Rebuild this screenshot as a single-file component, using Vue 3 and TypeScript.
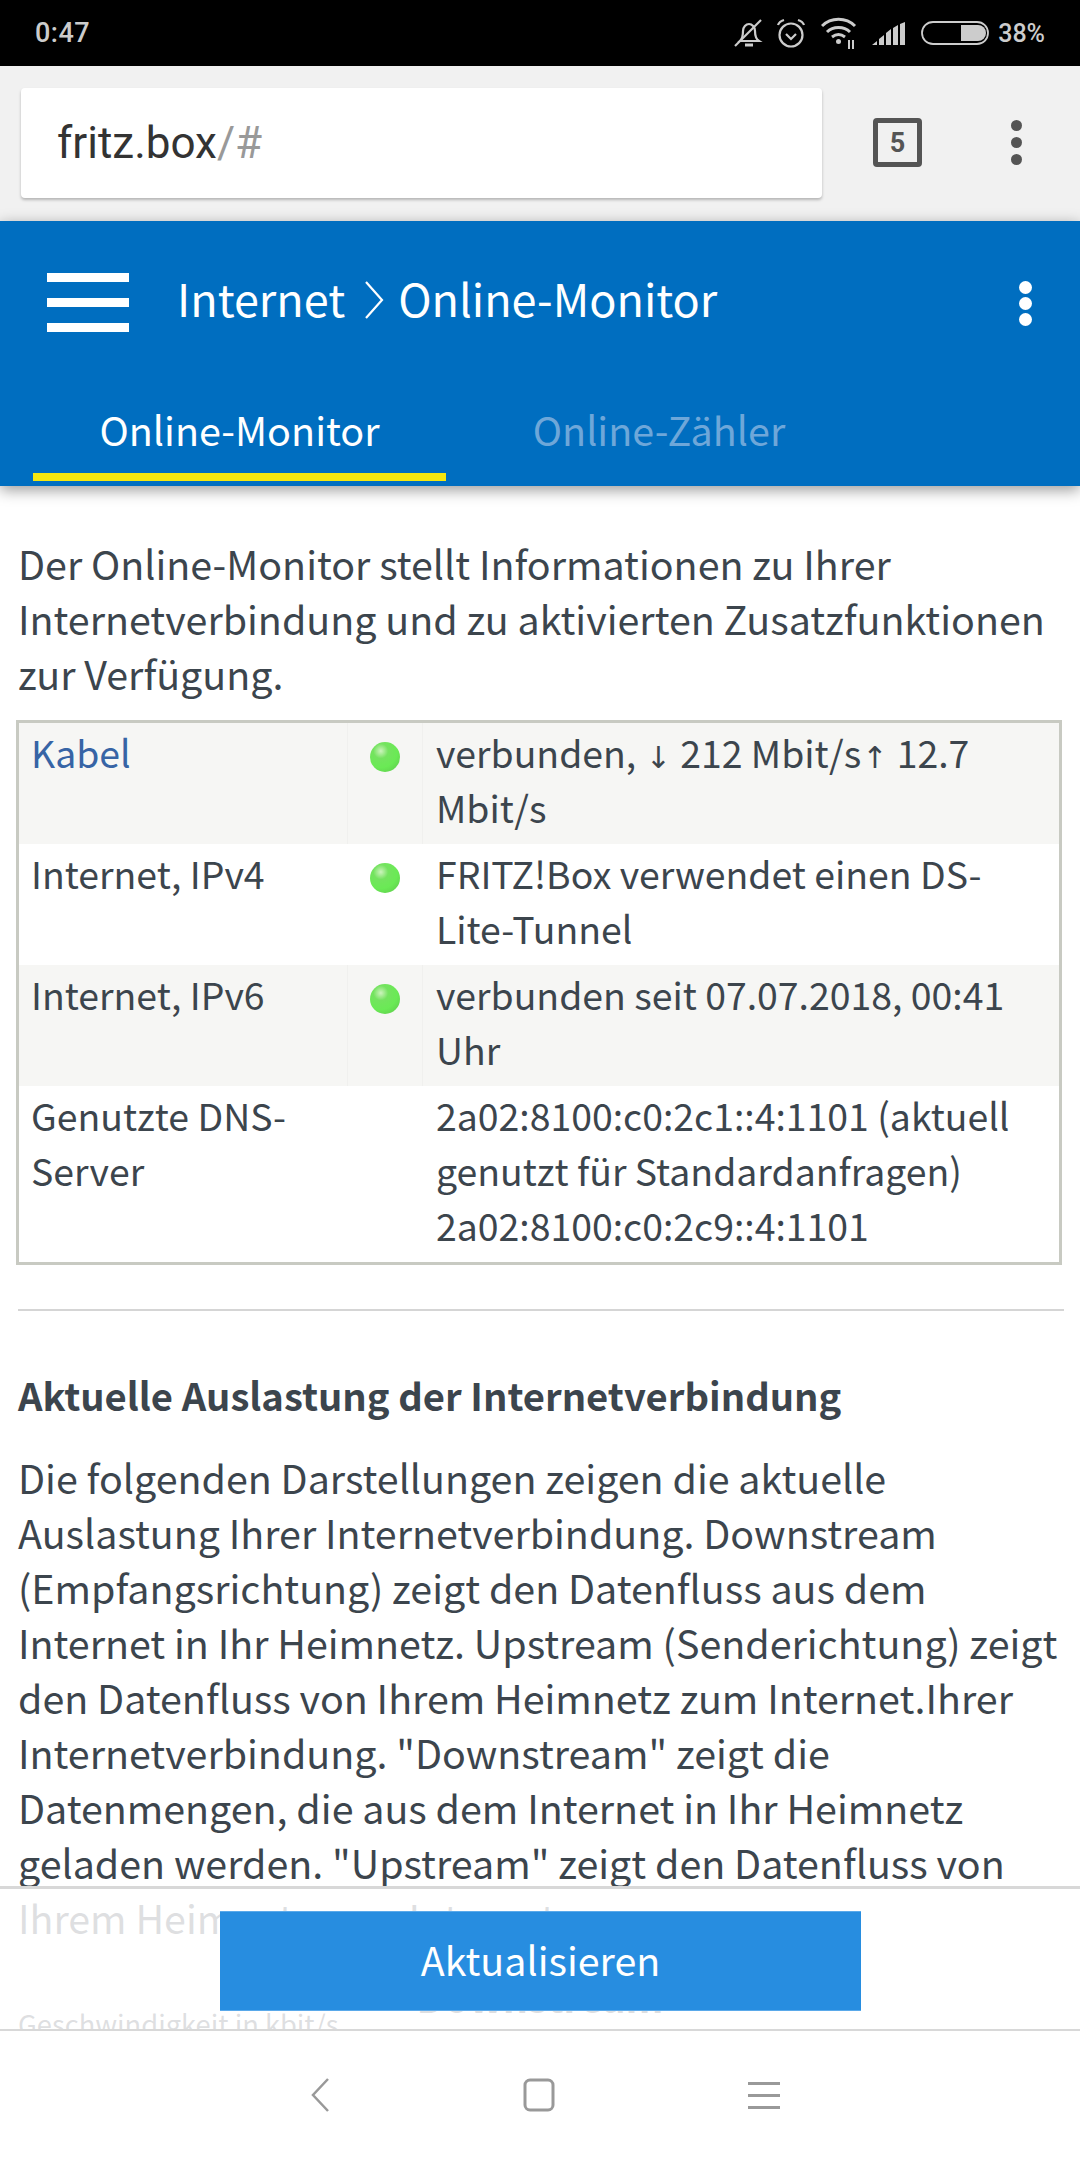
<script setup lang="ts">
interface StatusRow {
  label: string
  link?: boolean
  led: boolean
  lines: string[]
}

const rows: StatusRow[] = [
  { label: 'Kabel', link: true, led: true, lines: ['verbunden, ↓ 212 Mbit/s↑ 12.7', 'Mbit/s'] },
  { label: 'Internet, IPv4', led: true, lines: ['FRITZ!Box verwendet einen DS-', 'Lite-Tunnel'] },
  { label: 'Internet, IPv6', led: true, lines: ['verbunden seit 07.07.2018, 00:41', 'Uhr'] },
  {
    label: 'Genutzte DNS-Server',
    led: false,
    lines: ['2a02:8100:c0:2c1::4:1101 (aktuell', 'genutzt für Standardanfragen)', '2a02:8100:c0:2c9::4:1101'],
  },
]

const paragraph = [
  'Die folgenden Darstellungen zeigen die aktuelle',
  'Auslastung Ihrer Internetverbindung. Downstream',
  '(Empfangsrichtung) zeigt den Datenfluss aus dem',
  'Internet in Ihr Heimnetz. Upstream (Senderichtung) zeigt',
  'den Datenfluss von Ihrem Heimnetz zum Internet.Ihrer',
  'Internetverbindung. "Downstream" zeigt die',
  'Datenmengen, die aus dem Internet in Ihr Heimnetz',
  'geladen werden. "Upstream" zeigt den Datenfluss von',
  'Ihrem Heimnetz zum Internet.',
]

// die Pfeile sind in der Vorlage deutlich kleiner als der Text
function parts(line: string): string[] {
  return line.split(/([↓↑])/).filter(Boolean)
}
</script>

<template>
  <div class="screen">
    <div class="statusbar">
      <span class="time">0:47</span>
      <div class="status-icons">
        <svg class="bell" width="30" height="30" viewBox="0 0 30 30" fill="none" stroke="#ccc" stroke-width="2.2">
          <path d="M6 23c2-2 3-5 3-10 0-4 3-7 6-7s6 3 6 7c0 5 1 8 4 10z" />
          <path d="M11 27h8" stroke-width="3" />
          <path d="M1 28L27 2" />
        </svg>
        <svg width="30" height="31" viewBox="0 0 30 31" fill="none" stroke="#ccc" stroke-width="2.2">
          <circle cx="15" cy="17" r="11.5" />
          <path d="M10 16l5 5 5-5" />
          <path d="M2 7c1-3 3-4 6-5M28 7c-1-3-3-4-6-5" />
        </svg>
        <svg width="36" height="33" viewBox="0 0 36 33" fill="none" stroke="#ccc" stroke-width="3">
          <path d="M1 9c9-9 24-9 33 0" />
          <path d="M6 15c6-6 17-6 23 0" />
          <path d="M11 20c4-3 9-3 13 0" />
          <circle cx="17.500" cy="24.500" r="2.500" fill="#ccc" stroke="none" />
          <path d="M28 23v9M32 23v9" stroke-width="2" />
        </svg>
        <svg width="34" height="23" viewBox="0 0 34 23" fill="#ccc">
          <path d="M0 23l5-4v4zM7 17l5-4v10H7zM14 11l5-4v16h-5zM21 6l5-3v20h-5zM28 2l5-2v23h-5z" />
        </svg>
        <svg width="68" height="24" viewBox="0 0 68 24">
          <rect x="1" y="1" width="66" height="22" rx="11" fill="none" stroke="#ccc" stroke-width="1.800" />
          <path d="M40 4h17a8 8 0 0 1 0 16H40z" fill="#ccc" />
        </svg>
        <span class="battery">38%</span>
      </div>
    </div>

    <div class="browserbar">
      <div class="urlbox"><span class="host">fritz.box</span><span class="path">/#</span></div>
      <div class="tabcount">5</div>
      <div class="dots dots-grey"><i></i><i></i><i></i></div>
    </div>

    <header class="appbar">
      <div class="titlerow">
        <div class="burger"><i></i><i></i><i></i></div>
        <div class="title">
          <span>Internet</span>
          <svg class="crumb" width="20" height="38" viewBox="0 0 20 38" fill="none" stroke="#fff" stroke-width="2.200">
            <path d="M2 1l16 18L2 37" />
          </svg>
          <span>Online-Monitor</span>
        </div>
        <div class="dots dots-white"><i></i><i></i><i></i></div>
      </div>
      <nav class="tabs">
        <div class="tab active">Online-Monitor</div>
        <div class="tab second">Online-Zähler</div>
      </nav>
    </header>

    <main class="content">
      <p class="intro">
        Der Online-Monitor stellt Informationen zu Ihrer<br />
        Internetverbindung und zu aktivierten Zusatzfunktionen<br />
        zur Verfügung.
      </p>

      <table class="status-table">
        <tbody>
          <tr v-for="row in rows" :key="row.label">
            <td class="c-label">
              <span :class="{ link: row.link }">{{ row.label }}</span>
            </td>
            <td class="c-led"><span v-if="row.led" class="led"></span></td>
            <td class="c-value">
              <div v-for="line in row.lines" :key="line">
                <span v-for="(p, i) in parts(line)" :key="i" :class="{ arrow: p === '↓' || p === '↑' }">{{ p }}</span>
              </div>
            </td>
          </tr>
        </tbody>
      </table>

      <hr class="rule" />

      <h2 class="subhead">Aktuelle Auslastung der Internetverbindung</h2>
      <p class="body">
        <template v-for="line in paragraph" :key="line">{{ line }}<br /></template>
      </p>

      <div class="chart-title">Downstream</div>
      <div class="chart-unit">Geschwindigkeit in kbit/s</div>
    </main>

    <div class="footer">
      <button class="refresh" type="button">Aktualisieren</button>
    </div>

    <div class="navbar">
      <svg width="20" height="34" viewBox="0 0 20 34" fill="none" stroke="#999" stroke-width="2.500">
        <path d="M18 1L3 17l15 16" />
      </svg>
      <svg width="32" height="34" viewBox="0 0 32 34" fill="none" stroke="#999" stroke-width="3">
        <rect x="2" y="2" width="28" height="30" rx="5" />
      </svg>
      <svg class="menu" width="32" height="30" viewBox="0 0 32 30" fill="#999">
        <rect y="0" width="32" height="3" />
        <rect y="12" width="32" height="3" />
        <rect y="24" width="32" height="3" />
      </svg>
    </div>
  </div>
</template>

<style scoped>
.screen {
  position: relative;
  width: 1080px;
  height: 2160px;
  overflow: hidden;
  background: #fff;
  font-family: "Noto Sans CJK SC", "Noto Sans", sans-serif;
  color: #3c454d;
}

.statusbar {
  height: 66px;
  background: #000;
  display: flex;
  align-items: center;
  justify-content: space-between;
  padding: 0 35px;
  color: #ccc;
  font-family: Roboto, sans-serif;
  font-weight: 500;
  font-size: 25px;
}
.time {
  font-size: 27px;
  letter-spacing: 0.5px;
}
.status-icons {
  display: flex;
  align-items: center;
  gap: 15px;
}
.bell {
  margin-right: -3px;
}
.battery {
  margin-left: -6px;
}

.browserbar {
  height: 155px;
  background: #f1f1f1;
  display: flex;
  align-items: center;
  padding: 0 0 2px 21px;
  box-sizing: border-box;
}
.urlbox {
  width: 801px;
  height: 110px;
  box-sizing: border-box;
  padding-left: 36px;
  background: #fff;
  border-radius: 4px;
  box-shadow: 0 2px 3px rgba(0, 0, 0, 0.25);
  display: flex;
  align-items: center;
  font-family: Roboto, sans-serif;
  font-size: 44px;
  color: #333;
}
.path {
  color: #999;
}
.tabcount {
  width: 49px;
  height: 49px;
  margin-left: 51px;
  box-sizing: border-box;
  border: 5px solid #555;
  border-radius: 4px;
  display: flex;
  align-items: center;
  justify-content: center;
  font-family: Roboto, sans-serif;
  font-size: 27px;
  font-weight: 700;
  color: #555;
}
.dots {
  display: flex;
  flex-direction: column;
}
.dots i {
  display: block;
  border-radius: 50%;
}
.dots-grey {
  margin-left: 89px;
  gap: 6px;
}
.dots-grey i {
  width: 11px;
  height: 11px;
  background: #555;
}
.dots-white {
  margin-left: auto;
  gap: 3px;
}
.dots-white i {
  width: 13px;
  height: 13px;
  background: #fff;
}

.appbar {
  position: relative;
  z-index: 1;
  height: 265px;
  background: #006ec0;
  color: #fff;
  box-shadow: 0 4px 14px rgba(0, 0, 0, 0.4);
}
.titlerow {
  height: 165px;
  padding: 0 48px 0 47px;
  display: flex;
  align-items: center;
  font-size: 45px;
}
.burger {
  width: 82px;
  margin-top: -3px;
  display: flex;
  flex-direction: column;
  gap: 16px;
}
.burger i {
  display: block;
  height: 9px;
  background: #fff;
}
.title {
  margin: -12px 0 0 48px;
  display: flex;
  align-items: center;
  line-height: 55px;
}
.crumb {
  margin: 4px 14px 0 19px;
}
.tabs {
  display: flex;
  padding-left: 33px;
}
.tab {
  width: 413px;
  height: 95px;
  padding-top: 16px;
  box-sizing: border-box;
  text-align: center;
  font-size: 39.5px;
  line-height: 54px;
  color: #6ea7d9;
}
.tab.active {
  color: #fff;
  border-bottom: 8px solid #f5e60f;
}
.tab.second {
  width: 426px;
}

.content {
  padding: 49px 18px 0;
  font-size: 39.400px;
  line-height: 55px;
}
.intro {
  margin: 0;
  white-space: nowrap;
}

.status-table {
  width: 1046px;
  margin: 20px 0 0 -2px;
  border: 3px solid #c8cac2;
  border-collapse: separate;
  border-spacing: 0;
  table-layout: fixed;
  font-size: 37.400px;
}
.status-table td {
  box-sizing: border-box;
  padding: 2px 0 9px;
  vertical-align: top;
}
.status-table tr:nth-child(odd) td {
  background: #f6f6f4;
}
.c-label {
  width: 328px;
  padding-left: 12px !important;
}
.c-led {
  width: 76px;
  text-align: center;
  border-left: 1px solid #f0f0ee;
  border-right: 1px solid #f0f0ee;
}
.status-table tr:nth-child(even) .c-led {
  border-color: transparent;
}
.c-value {
  padding-left: 13px !important;
  white-space: nowrap;
}
.arrow {
  padding: 0 1px;
  font-family: "DejaVu Sans", sans-serif;
  font-size: 30px;
  line-height: 0;
}
.link {
  color: #3764a5;
}
.led {
  display: block;
  width: 30px;
  height: 30px;
  margin: 17px auto 0;
  border-radius: 50%;
  background: radial-gradient(circle at 36% 30%, #cdf3bd 0, #74e35f 26%, #6aea55 58%, #5cc44a 100%);
  filter: blur(0.6px);
}

.rule {
  margin: 44px -2px 0 0;
  border: 0;
  border-top: 2px solid #d5d5d5;
}
.subhead {
  margin: 56px 0 0;
  font-size: 38.200px;
  line-height: 55px;
  font-weight: 700;
}
.body {
  margin: 27px 0 0;
  white-space: nowrap;
}
.chart-title {
  margin-top: 24px;
  text-align: center;
  font-weight: 700;
}
.chart-unit {
  font-size: 27.300px;
  line-height: 36px;
  margin-top: -18px;
}

.footer {
  position: absolute;
  left: 0;
  right: 0;
  top: 1886px;
  height: 143px;
  box-sizing: border-box;
  padding-top: 22px;
  display: flex;
  justify-content: center;
  align-items: flex-start;
  border-top: 3px solid #d8d8d8;
  background: rgba(255, 255, 255, 0.83);
}
.refresh {
  width: 641px;
  height: 100px;
  margin-left: 1px;
  padding-bottom: 6px;
  border: 0;
  border-top: 1px solid #5aa9ea;
  border-bottom: 1px solid #5aa9ea;
  background: #278de0;
  color: #fff;
  font-family: inherit;
  font-size: 39.400px;
}

.navbar {
  position: absolute;
  left: 0;
  right: 0;
  top: 2029px;
  bottom: 0;
  box-sizing: border-box;
  border-top: 2px solid #d8d8d8;
  background: #fff;
  padding: 47px 300px 0 310px;
  display: flex;
  justify-content: space-between;
  align-items: flex-start;
}
.menu {
  margin-top: 4px;
}
</style>
